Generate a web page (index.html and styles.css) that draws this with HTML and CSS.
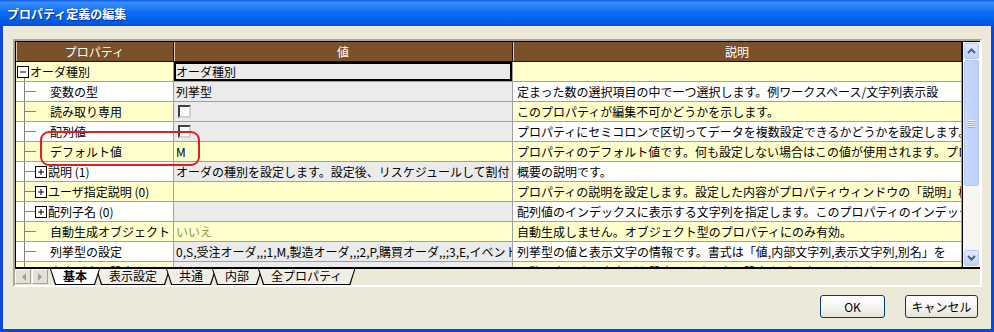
FILE: index.html
```html
<!doctype html>
<html>
  <head>
    <meta charset="utf-8" />
    <title>プロパティ定義の編集</title>
    <link rel="stylesheet" href="styles.css">
  </head>
  <body>
    <div class="window">
      <div class="titlebar">
        <span class="title">プロパティ定義の編集</span>
      </div>
      <div class="client">
        <div class="frame">
          <div class="grid-area">
            <div class="grid">
              <div class="hd">プロパティ</div>
              <div class="hd">値</div>
              <div class="hd">説明</div>

              <div class="c prop y root">
                <svg class="box" width="12" height="12" viewBox="0 0 12 12"><rect x="0.5" y="0.5" width="11" height="11" fill="#fff" stroke="#000"/><path d="M3 6h6" stroke="#000"/></svg>
                <span class="root-name">オーダ種別</span>
              </div>
              <div class="c g edit">オーダ種別</div>
              <div class="c y desc"></div>

              <div class="c prop w"><span class="tick"></span><span class="leaf">変数の型</span></div>
              <div class="c g">列挙型</div>
              <div class="c w desc">定まった数の選択項目の中で一つ選択します。例ワークスペース/文字列表示設</div>

              <div class="c prop y"><span class="tick"></span><span class="leaf">読み取り専用</span></div>
              <div class="c g"><span class="check"></span></div>
              <div class="c y desc">このプロパティが編集不可かどうかを示します。</div>

              <div class="c prop w"><span class="tick"></span><span class="leaf">配列値</span></div>
              <div class="c g"><span class="check"></span></div>
              <div class="c w desc">プロパティにセミコロンで区切ってデータを複数設定できるかどうかを設定します。</div>

              <div class="c prop y"><span class="tick"></span><span class="leaf">デフォルト値</span></div>
              <div class="c y">M</div>
              <div class="c y desc">プロパティのデフォルト値です。何も設定しない場合はこの値が使用されます。プロ</div>

              <div class="c prop w">
                <span class="tick short"></span>
                <svg class="box" width="12" height="12" viewBox="0 0 12 12"><rect x="0.5" y="0.5" width="11" height="11" fill="#fff" stroke="#000"/><path d="M3 6h6M6 3v6" stroke="#000"/></svg>
                <span class="node">説明 (1)</span>
              </div>
              <div class="c g">オーダの種別を設定します。設定後、リスケジュールして割付</div>
              <div class="c w desc">概要の説明です。</div>

              <div class="c prop y">
                <span class="tick short"></span>
                <svg class="box" width="12" height="12" viewBox="0 0 12 12"><rect x="0.5" y="0.5" width="11" height="11" fill="#fff" stroke="#000"/><path d="M3 6h6M6 3v6" stroke="#000"/></svg>
                <span class="node">ユーザ指定説明 (0)</span>
              </div>
              <div class="c y"></div>
              <div class="c y desc">プロパティの説明を設定します。設定した内容がプロパティウィンドウの「説明」欄や</div>

              <div class="c prop w">
                <span class="tick short"></span>
                <svg class="box" width="12" height="12" viewBox="0 0 12 12"><rect x="0.5" y="0.5" width="11" height="11" fill="#fff" stroke="#000"/><path d="M3 6h6M6 3v6" stroke="#000"/></svg>
                <span class="node">配列子名 (0)</span>
              </div>
              <div class="c g"></div>
              <div class="c w desc">配列値のインデックスに表示する文字列を指定します。このプロパティのインデック</div>

              <div class="c prop y"><span class="tick"></span><span class="leaf">自動生成オブジェクト</span></div>
              <div class="c y muted">いいえ</div>
              <div class="c y desc">自動生成しません。オブジェクト型のプロパティにのみ有効。</div>

              <div class="c prop w"><span class="tick"></span><span class="leaf">列挙型の設定</span></div>
              <div class="c g">0,S,受注オーダ,,;1,M,製造オーダ,,;2,P,購買オーダ,,;3,E,イベント,,</div>
              <div class="c w desc">列挙型の値と表示文字の情報です。書式は「値,内部文字列,表示文字列,別名」を</div>

              <div class="c prop y"><span class="tick"></span><span class="leaf">文字列表示設定</span></div>
              <div class="c g">なし</div>
              <div class="c y desc">一覧に表示する文字列を設定します。表示設定タブで変更できます。</div>
            </div>

            <div class="scrollbar">
              <div class="sb-btn">
                <svg width="9" height="6" viewBox="0 0 9 6"><path d="M1 5l3.5-3.5L8 5" fill="none" stroke="#4d6185" stroke-width="2"/></svg>
              </div>
              <div class="sb-thumb">
                <span class="grip"></span><span class="grip"></span><span class="grip"></span><span class="grip"></span>
              </div>
              <div class="sb-track"></div>
              <div class="sb-btn">
                <svg width="9" height="6" viewBox="0 0 9 6"><path d="M1 1l3.5 3.5L8 1" fill="none" stroke="#4d6185" stroke-width="2"/></svg>
              </div>
            </div>
          </div>

          <div class="tabstrip">
            <div class="tab-nav">
              <svg width="5" height="8" viewBox="0 0 5 8"><path d="M5 0v8L1 4z" fill="#a0a0a0"/></svg>
            </div>
            <div class="tab-nav">
              <svg width="5" height="8" viewBox="0 0 5 8"><path d="M0 0v8l4-4z" fill="#a0a0a0"/></svg>
            </div>
            <div class="tabs">
              <div class="tab active"><div class="tab-face">基本</div></div>
              <div class="tab"><div class="tab-face">表示設定</div></div>
              <div class="tab"><div class="tab-face">共通</div></div>
              <div class="tab"><div class="tab-face">内部</div></div>
              <div class="tab"><div class="tab-face">全プロパティ</div></div>
            </div>
          </div>
        </div>

        <div class="buttons">
          <button class="btn btn-ok">OK</button>
          <button class="btn btn-cancel">キャンセル</button>
        </div>
      </div>

      <!-- red note drawn over the grid -->
      <div class="highlight"></div>
    </div>
  </body>
</html>
```

FILE: styles.css
```css
body {
  margin: 0;
  font-family: "Noto Sans CJK JP", "Liberation Sans", sans-serif;
  font-size: 12px;
  color: #000;
}

.window {
  position: relative;
  width: 994px;
  height: 332px;
  box-sizing: border-box;
  display: flex;
  flex-direction: column;
  background: #0b48d9;
}

.titlebar {
  height: 26px;
  flex-shrink: 0;
  display: flex;
  align-items: center;
  padding-left: 7px;
  background: linear-gradient(to bottom, #0a5ae8 0%, #3d8fff 10%, #2a83fb 22%, #0e6ef5 45%, #0363ed 70%, #0257e0 90%, #0a4fd6 100%);
}
.title {
  color: #fff;
  font-weight: bold;
  font-size: 12px;
  text-shadow: 1px 1px 0 #0a2f9a;
}

.client {
  flex: 1;
  margin: 0 3px 3px 3px;
  background: #ece9d8;
  padding: 13px 9px 0 10px;
}

.frame {
  width: 969px;
  height: 248px;
  box-sizing: border-box;
  border: 2px solid;
  border-color: #aca899 #fff #fff #aca899;
  display: flex;
  flex-direction: column;
}

.grid-area {
  display: flex;
  height: 226px;
  box-sizing: border-box;
  border-top: 1px solid #000;
  border-left: 1px solid #000;
}

.grid {
  width: 946px;
  height: 225px;
  overflow: hidden;
  display: grid;
  grid-template-columns: 158px 339px 449px;
  grid-auto-rows: 20px;
}

.hd {
  background: #7b5129;
  color: #fff;
  text-align: center;
  line-height: 19px;
  box-sizing: border-box;
  border-right: 1px solid #1c1208;
  border-bottom: 1px solid #1c1208;
  box-shadow: inset 1px 0 0 #d8cbb8;
}

.c {
  box-sizing: border-box;
  border-right: 1px solid #a0a0a0;
  border-bottom: 1px solid #a0a0a0;
  line-height: 19px;
  padding-left: 2px;
  white-space: nowrap;
  overflow: hidden;
}
.c.desc {
  padding-left: 4px;
}
.y { background-color: #ffffcc; }
.w { background-color: #fff; }
.g { background-color: #ebebeb; }

.edit {
  box-shadow: inset 0 0 0 2px #000;
}
.muted {
  color: #8a9a36;
}

.prop {
  display: flex;
  align-items: center;
  padding-left: 0;
  background-image: linear-gradient(#808080, #808080);
  background-repeat: no-repeat;
  background-position: 8px 0;
  background-size: 1px 100%;
}
.prop.root {
  background-position: 8px 13px;
}
.root .box {
  margin-left: 1px;
}
.root-name {
  margin-left: 1px;
}
.tick {
  width: 11px;
  height: 1px;
  margin-left: 9px;
  background: #808080;
  flex-shrink: 0;
}
.tick.short {
  width: 10px;
}
.box {
  flex-shrink: 0;
}
.leaf {
  margin-left: 14px;
}
.node {
  margin-left: 1px;
}

.check {
  display: inline-block;
  width: 13px;
  height: 13px;
  box-sizing: border-box;
  margin: 3px 0 0 2px;
  vertical-align: top;
  background: #fff;
  border: 2px solid;
  border-color: #404040 #d4d0c8 #d4d0c8 #404040;
}

.scrollbar {
  width: 18px;
  display: flex;
  flex-direction: column;
  background: #f7f6f2;
  border-left: 1px solid #000;
  box-sizing: border-box;
}
.sb-btn {
  height: 16px;
  margin: 1px;
  box-sizing: border-box;
  border: 1px solid #b7c9f2;
  border-radius: 2px;
  background: linear-gradient(to bottom, #e1eafe, #c0d2fa);
  display: flex;
  align-items: center;
  justify-content: center;
}
.sb-thumb {
  height: 126px;
  margin: 0 1px;
  box-sizing: border-box;
  border: 1px solid #b7c9f2;
  border-radius: 2px;
  background: linear-gradient(to right, #cad9fc, #bccffa);
  display: flex;
  flex-direction: column;
  align-items: center;
  justify-content: center;
  gap: 1px;
}
.grip {
  width: 7px;
  height: 1px;
  background: #eef3fe;
  box-shadow: 0 1px 0 #8ca8e6;
}
.sb-track {
  flex: 1;
}

.tabstrip {
  height: 18px;
  box-sizing: border-box;
  border-top: 2px solid #000;
  display: flex;
  align-items: flex-start;
}
.tab-nav {
  width: 16px;
  height: 15px;
  box-sizing: border-box;
  margin-right: 1px;
  border: 1px solid;
  border-color: #fff #a0a0a0 #a0a0a0 #fff;
  background: #e4e1d4;
  display: flex;
  align-items: center;
  justify-content: center;
}
.tabs {
  display: flex;
}
.tab {
  position: relative;
  height: 16px;
  box-sizing: border-box;
  margin-left: -4px;
  padding: 0 1px 1px;
  background: #000;
  clip-path: polygon(0 0, 100% 0, calc(100% - 5px) 100%, 5px 100%);
}
.tab:first-child {
  margin-left: 1px;
}
.tab-face {
  height: 15px;
  line-height: 14px;
  padding: 0 12px;
  background: #f1efe5;
  clip-path: polygon(0 0, 100% 0, calc(100% - 5px) 100%, 5px 100%);
}
.tab.active {
  z-index: 2;
}
.tab.active .tab-face {
  background: #fff;
  font-weight: bold;
}

.buttons {
  margin-top: 8px;
  margin-right: 4px;
  display: flex;
  justify-content: flex-end;
  gap: 20px;
}
.btn {
  height: 23px;
  box-sizing: border-box;
  border: 1px solid #003c74;
  border-radius: 3px;
  background: linear-gradient(to bottom, #fff 0%, #f4f3ee 60%, #e3e1d6 100%);
  font-family: "Noto Sans CJK JP", "Liberation Sans", sans-serif;
  font-size: 12px;
  color: #000;
  padding: 0;
}
.btn-ok {
  width: 65px;
}
.btn-cancel {
  width: 73px;
}

.highlight {
  position: absolute;
  left: 40px;
  top: 131px;
  width: 160px;
  height: 35px;
  box-sizing: border-box;
  border: 2px solid #e02020;
  border-radius: 9px;
}
```
